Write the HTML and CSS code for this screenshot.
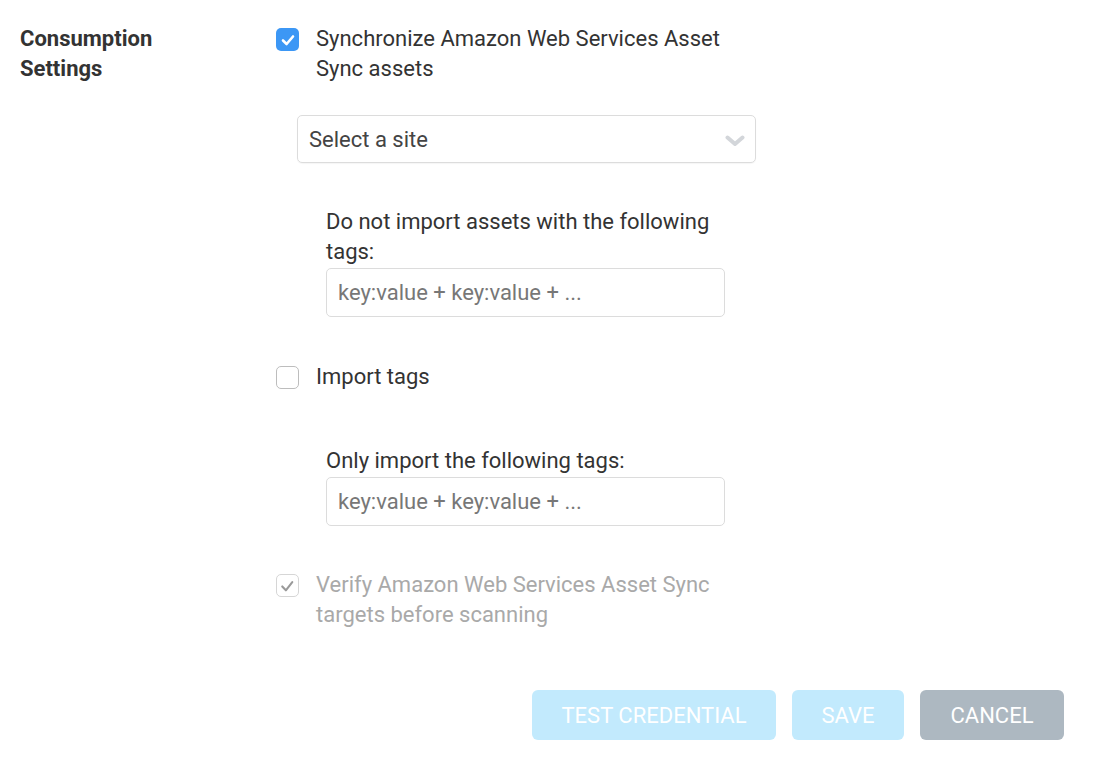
FILE: index.html
```html
<!DOCTYPE html>
<html>
<head>
<meta charset="utf-8">
<link rel="stylesheet" href="styles.css">
</head>
<body>
<div class="page">
  <div class="section">
    <div class="section-label">Consumption<br>Settings</div>
    <div class="section-body">
      <label class="check-row">
        <span class="cb cb-checked">
          <svg viewBox="0 0 22 22" width="22" height="22"><path d="M6 11.5 L9.6 15 L16 7.5" fill="none" stroke="#fff" stroke-width="2.6" stroke-linecap="round" stroke-linejoin="round"/></svg>
        </span>
        <span class="check-text">Synchronize Amazon Web Services Asset<br>Sync assets</span>
      </label>

      <div class="select">
        <span class="select-text">Select a site</span>
        <svg class="chev" viewBox="0 0 20 12" width="20" height="12"><path d="M2.5 2.5 L10 9 L17.5 2.5" fill="none" stroke="#d3d6da" stroke-width="4" stroke-linecap="round" stroke-linejoin="round"/></svg>
      </div>

      <div class="field field-first">
        <div class="field-label">Do not import assets with the following<br>tags:</div>
        <div class="input">key:value + key:value + ...</div>
      </div>

      <label class="check-row row-import">
        <span class="cb cb-empty"></span>
        <span class="check-text single">Import tags</span>
      </label>

      <div class="field field-second">
        <div class="field-label">Only import the following tags:</div>
        <div class="input input-2">key:value + key:value + ...</div>
      </div>

      <label class="check-row row-verify">
        <span class="cb cb-disabled">
          <svg viewBox="0 0 22 22" width="22" height="22"><path d="M5.5 11.5 L9.3 15.5 L16 7" fill="none" stroke="#9a9a9a" stroke-width="2.2" stroke-linecap="round" stroke-linejoin="round"/></svg>
        </span>
        <span class="check-text disabled">Verify Amazon Web Services Asset Sync<br>targets before scanning</span>
      </label>
    </div>
  </div>

  <div class="actions">
    <button class="btn btn-primary btn-test">TEST CREDENTIAL</button>
    <button class="btn btn-primary btn-save">SAVE</button>
    <button class="btn btn-cancel">CANCEL</button>
  </div>
</div>
</body>
</html>
```

FILE: styles.css
```css
* { box-sizing: border-box; }
html, body { margin: 0; padding: 0; background: #fff; }
body {
  font-family: Roboto, "Liberation Sans", Arial, sans-serif;
  color: #333;
  width: 1118px;
  height: 772px;
  overflow: hidden;
}
.page { padding-top: 24px; }
.section { display: flex; }
.section-label {
  width: 276px;
  padding-left: 20px;
  font-weight: 700;
  font-size: 22px;
  line-height: 30px;
  color: #333;
}
.section-body { display: flex; flex-direction: column; }
.check-row { display: flex; align-items: flex-start; }
.cb {
  width: 23px;
  height: 23px;
  border-radius: 5px;
  margin-top: 4px;
  margin-right: 17px;
  flex: none;
  display: flex;
  align-items: center;
  justify-content: center;
}
.cb-checked { background: #3c97f5; }
.cb-empty { border: 1px solid #bdbdbd; background: #fff; }
.cb-disabled { border: 1px solid #d6d6d6; background: #fff; }
.check-text { font-size: 22px; line-height: 30px; color: #333; }
.check-text.disabled { color: #a9a9a9; }

.select {
  margin-top: 31px;
  margin-left: 21px;
  width: 459px;
  height: 48px;
  border: 1px solid #dcdcdc;
  border-radius: 5px;
  display: flex;
  align-items: center;
  justify-content: space-between;
  padding: 0 10px 0 11px;
  box-shadow: 0 1px 1px rgba(0,0,0,0.04);
}
.select-text { font-size: 22px; color: #444; }
.chev { margin-top: 4px; }

.field { margin-left: 50px; }
.field-first { margin-top: 44px; }
.field-second { margin-top: 54px; }
.field-label { font-size: 22px; line-height: 30px; color: #333; }
.input {
  margin-top: 1px;
  width: 399px;
  height: 49px;
  border: 1px solid #dcdcdc;
  border-radius: 5px;
  padding: 0 11px;
  display: flex;
  align-items: center;
  font-size: 22px;
  color: #777;
}
.input-2 { margin-top: 1px; height: 49px; }

.row-import { margin-top: 45px; }
.row-verify { margin-top: 44px; }

.actions {
  display: flex;
  justify-content: flex-end;
  gap: 16px;
  padding-right: 54px;
  margin-top: 60px;
}
.btn {
  height: 50px;
  border: none;
  border-radius: 6px;
  font-family: Roboto, "Liberation Sans", Arial, sans-serif;
  font-size: 22px;
  color: #fff;
  padding: 0;
}
.btn-primary { background: #c2eafd; }
.btn-test { width: 244px; }
.btn-save { width: 112px; }
.btn-cancel { width: 144px; background: #adb8c1; }
```
